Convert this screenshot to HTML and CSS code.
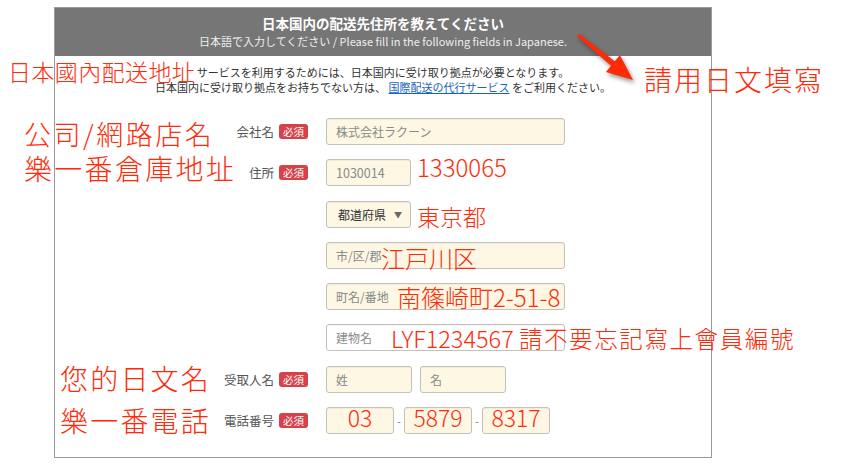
FILE: index.html
```html
<!DOCTYPE html>
<html lang="ja">
<head>
  <meta charset="UTF-8">
  <meta name="viewport" content="width=device-width, initial-scale=1.0">
  <title>配送先住所</title>
  <link rel="stylesheet" href="styles.css">
</head>
<body>
  <div class="panel">
    <div class="panel-head">
      <div class="panel-title">日本国内の配送先住所を教えてください</div>
      <div class="panel-sub">日本語で入力してください / Please fill in the following fields in Japanese.</div>
    </div>

    <div class="intro">
      <p>サービスを利用するためには、日本国内に受け取り拠点が必要となります。</p>
      <p>日本国内に受け取り拠点をお持ちでない方は、 <a href="#">国際配送の代行サービス</a> をご利用ください。</p>
    </div>

    <div class="form">
      <div class="row">
        <div class="label"><span>会社名</span><span class="req">必須</span></div>
        <div class="field wide">株式会社ラクーン</div>
      </div>
      <div class="row">
        <div class="label"><span>住所</span><span class="req">必須</span></div>
        <div class="field short">1030014</div>
      </div>
      <div class="row">
        <div class="label"></div>
        <div class="field short select"><span>都道府県</span><span class="caret">&#9660;</span></div>
      </div>
      <div class="row">
        <div class="label"></div>
        <div class="field wide">市/区/郡</div>
      </div>
      <div class="row">
        <div class="label"></div>
        <div class="field wide">町名/番地</div>
      </div>
      <div class="row">
        <div class="label"></div>
        <div class="field wide optional">建物名</div>
      </div>
      <div class="row">
        <div class="label"><span>受取人名</span><span class="req">必須</span></div>
        <div class="name-group">
          <div class="field name">姓</div>
          <div class="field name">名</div>
        </div>
      </div>
      <div class="row">
        <div class="label"><span>電話番号</span><span class="req">必須</span></div>
        <div class="phone-group">
          <div class="field phone"><span class="value">03</span></div>
          <span class="dash">-</span>
          <div class="field phone"><span class="value">5879</span></div>
          <span class="dash">-</span>
          <div class="field phone"><span class="value">8317</span></div>
        </div>
      </div>
    </div>
  </div>

  <!-- hand-written notes drawn over the screenshot -->
  <div class="notes">
    <span class="note n-domestic">日本國內配送地址</span>
    <span class="note n-japanese">請用日文填寫</span>
    <span class="note n-company">公司/網路店名</span>
    <span class="note n-warehouse">樂一番倉庫地址</span>
    <span class="note n-zip">1330065</span>
    <span class="note n-pref">東京都</span>
    <span class="note n-city">江戸川区</span>
    <span class="note n-town">南篠崎町2-51-8</span>
    <span class="note n-building">LYF1234567 <span class="cjk">請不要忘記寫上會員編號</span></span>
    <span class="note n-name">您的日文名</span>
    <span class="note n-phone">樂一番電話</span>
    <svg class="arrow" width="72" height="62" viewBox="0 0 72 62">
      <polygon points="10.9,7.8 46.8,35.2 51.9,29 65,54 37.9,46 43,39.8 9,10.2" fill="#ff2a08"/>
    </svg>
  </div>
</body>
</html>
```

FILE: styles.css
```css
body {
  margin: 0;
  position: relative;
  width: 865px;
  height: 467px;
  overflow: hidden;
  background: #fff;
  font-family: "Noto Sans CJK JP", "Noto Sans", sans-serif;
  color: #333;
}

.panel {
  margin: 7px 0 0 54px;
  width: 658px;
  box-sizing: border-box;
  border: 1px solid #9a9a9a;
  padding-bottom: 23px;
}

.panel-head {
  background: #767676;
  color: #fff;
  text-align: center;
  padding: 6px 0 6px;
}

.panel-title {
  font-size: 13.5px;
  font-weight: 700;
  line-height: 18px;
}

.panel-sub {
  font-size: 11px;
  line-height: 18px;
  color: #eee;
}

.intro {
  padding-top: 9px;
  text-align: center;
  font-size: 11px;
  line-height: 15px;
  color: #333;
}

.intro p {
  margin: 0;
}

.intro a {
  color: #1a63c4;
  text-decoration: underline;
}

.form {
  margin-top: 23px;
  display: flex;
  flex-direction: column;
  gap: 14.3px;
}

.row {
  display: flex;
  align-items: center;
  height: 27px;
}

.label {
  width: 253px;
  margin-right: 18px;
  display: flex;
  justify-content: flex-end;
  align-items: center;
  gap: 5px;
  font-size: 12.5px;
  color: #555;
  flex-shrink: 0;
}

.req {
  background: #d9414a;
  color: #fff;
  font-size: 10.5px;
  line-height: 15px;
  padding: 0 4px;
  border-radius: 3px;
}

.field {
  height: 27px;
  box-sizing: border-box;
  background: #fdf7e4;
  border: 1px solid #c4c1b8;
  border-radius: 3px;
  box-shadow: inset 0 1px 1px rgba(0, 0, 0, 0.05);
  display: flex;
  align-items: center;
  padding: 0 8px 0 9px;
  font-size: 12px;
  color: #8a8a8a;
  white-space: nowrap;
}

.field.wide { width: 239px; }
.field.short { width: 85px; font-size: 12.5px; }
.field.optional { background: #fff; }

.field.select {
  justify-content: space-between;
  color: #333;
  font-size: 12px;
  padding-left: 11px;
}

.caret {
  font-size: 8px;
  color: #666;
}

.name-group {
  display: flex;
  gap: 8px;
}

.field.name { width: 86px; }

.phone-group {
  display: flex;
  align-items: center;
}

.field.phone {
  width: 68px;
  justify-content: center;
  align-items: flex-start;
  padding: 0;
}

.field.phone .value {
  font-family: "Noto Sans CJK TC", sans-serif;
  font-weight: 300;
  font-size: 23px;
  line-height: 1;
  margin-top: -2px;
  color: #ff2a08;
}

.dash {
  width: 10px;
  text-align: center;
  font-size: 10px;
  color: #666;
}

/* notes */
.note {
  position: absolute;
  color: #ff2a08;
  font-family: "Noto Sans CJK TC", sans-serif;
  font-weight: 300;
  line-height: 1;
  white-space: nowrap;
}

.n-domestic { left: 8px; top: 60px; font-size: 23px; letter-spacing: 0.4px; }
.n-japanese { left: 644px; top: 65px; font-size: 28px; letter-spacing: 2px; }
.n-company { left: 24px; top: 120px; font-size: 27px; letter-spacing: 2.5px; }
.n-warehouse { left: 24px; top: 154px; font-size: 28px; letter-spacing: 2.3px; }
.n-zip { left: 417px; top: 155px; font-size: 24px; }
.n-pref { left: 417px; top: 205px; font-size: 23px; }
.n-city { left: 381px; top: 246px; font-size: 24px; }
.n-town { left: 397px; top: 285px; font-size: 24px; }
.n-building { left: 391px; top: 327px; font-size: 23.5px; }
.n-building .cjk { letter-spacing: 1.6px; }
.n-name { left: 60px; top: 364px; font-size: 28px; letter-spacing: 2.2px; }
.n-phone { left: 60px; top: 406px; font-size: 28px; letter-spacing: 2.2px; }

.arrow {
  position: absolute;
  left: 568px;
  top: 26px;
  filter: drop-shadow(2px 3px 2px rgba(0, 0, 0, 0.4));
}
```
